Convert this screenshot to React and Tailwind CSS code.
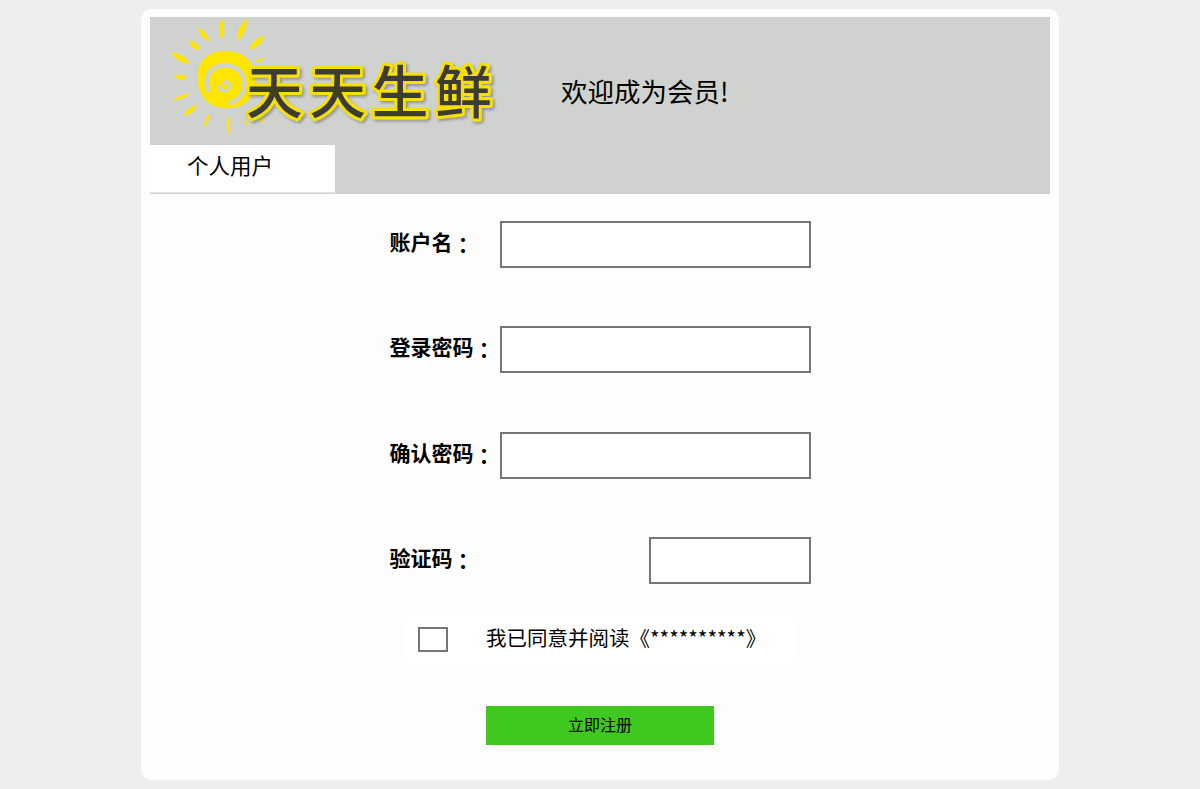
const FONT = "font-['Noto_Sans_CJK_SC','Liberation_Sans',sans-serif]";

const rays = [
  [170, 10, 168, 75, 15], [245, 10, 215, 80, 19], [298, 62, 252, 104, 18],
  [98, 38, 133, 80, 15], [70, 77, 105, 105, 17], [17, 112, 75, 147, 19],
  [27, 183, 65, 190, 15], [20, 257, 78, 235, 10], [55, 303, 95, 270, 15],
  [135, 293, 115, 337, 9], [190, 303, 190, 358, 10], [240, 310, 243, 333, 7],
  [285, 305, 293, 327, 7], [296, 130, 270, 142, 9],
];

function rayPath([x1, y1, x2, y2, w]) {
  const mx = (x1 + x2) / 2;
  const my = (y1 + y2) / 2;
  const len = Math.hypot(x2 - x1, y2 - y1);
  const nx = (-(y2 - y1) / len) * w;
  const ny = ((x2 - x1) / len) * w;
  return `M${x1} ${y1}Q${mx + nx} ${my + ny} ${x2} ${y2}Q${mx - nx} ${my - ny} ${x1} ${y1}Z`;
}

function Logo() {
  return (
    <svg viewBox="30 51 1080 384" className="w-[360px] h-[128px] shrink-0">
      <defs>
        <filter id="shadow" x="-10%" y="-10%" width="120%" height="120%">
          <feDropShadow dx="6" dy="6" stdDeviation="4" floodColor="#000" floodOpacity="0.3" />
        </filter>
      </defs>
      <g transform="translate(75 45)">
        {rays.map((r, i) => (
          <path key={i} d={rayPath(r)} fill="#ffe600" />
        ))}
        <path
          d="M97 190C95 140 125 108 180 108C235 108 270 140 270 195C270 250 240 280 185 280C130 280 98 245 97 190Z"
          fill="#ffe600"
        />
        <path
          d="M128 226C114 178 143 148 185 152C230 156 246 195 234 228C226 248 212 258 196 264"
          fill="none"
          stroke="#d0d2cf"
          strokeWidth="13"
          strokeLinecap="round"
        />
        <path
          d="M176 205C186 194 198 208 190 222C182 232 166 228 160 214"
          fill="none"
          stroke="#d0d2cf"
          strokeWidth="10"
          strokeLinecap="round"
        />
      </g>
      <text
        x="318 508 695 885"
        y="340"
        fontSize="170"
        fontWeight="500"
        fill="#3d3a35"
        stroke="#f5e000"
        strokeWidth="18"
        strokeLinejoin="round"
        filter="url(#shadow)"
        className={`${FONT} [paint-order:stroke]`}
      >
        天天生鲜
      </text>
    </svg>
  );
}

function Field({ label, short }) {
  return (
    <div className="flex items-center justify-between h-[47px]">
      <label className="font-bold text-[21px] text-black leading-none pb-[6px]">
        {label}
        <span className="inline-block translate-y-[3px] font-['Noto_Sans_CJK_TC',sans-serif]">：</span>
      </label>
      <input
        type="text"
        className={`h-[47px] ${short ? "w-[162px]" : "w-[311px]"} border-2 border-[#767676] bg-white`}
      />
    </div>
  );
}

export default function App() {
  return (
    <div className={`min-h-screen bg-[#eeeeee] py-[9px] ${FONT}`}>
      <div className="mx-auto w-[918px] h-[771px] rounded-[10px] bg-[#fdfdfd] px-[9px] pt-[8px]">
        <header className="flex flex-col h-[177px] bg-[#d0d2cf]">
          <div className="flex items-center h-[128px]">
            <Logo />
            <h1 className="ml-[51px] mt-[21px] text-[26.5px] font-normal text-black leading-none">欢迎成为会员!</h1>
          </div>
          <div className="flex items-center w-[185px] h-[48px] bg-white border-b border-[#e4e4e4] pl-[37px] pb-[6px] text-[21.5px] text-black">
            个人用户
          </div>
        </header>
        <main className="flex flex-col items-center pt-[27px]">
          <form className="flex flex-col items-center">
            <div className="flex flex-col gap-[58.33px] w-[421px]">
              <Field label="账户名" />
              <Field label="登录密码" />
              <Field label="确认密码" />
              <Field label="验证码" short />
            </div>
            <div className="flex items-center w-[392px] h-[48px] mt-[32px] rounded-[8px] bg-white pl-[14px]">
              <input
                type="checkbox"
                className="appearance-none w-[30px] h-[25px] border-2 border-[#767676] bg-white shrink-0"
              />
              <span className="ml-[38px] pb-[6px] text-[20.5px] text-black leading-none">我已同意并阅读《**********》</span>
            </div>
            <button
              type="button"
              className="mt-[42px] w-[228px] h-[39px] bg-[#3fc920] pb-[2px] text-[16px] text-black"
            >
              立即注册
            </button>
          </form>
        </main>
      </div>
    </div>
  );
}
